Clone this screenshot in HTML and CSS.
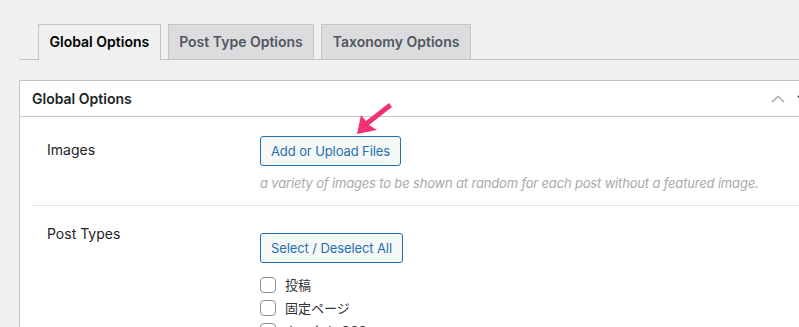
FILE: index.html
```html
<!DOCTYPE html>
<html lang="ja">
<head>
<meta charset="utf-8">
<title>Global Options</title>
<link rel="stylesheet" href="styles.css">
</head>
<body>
<div class="wrap">
  <nav class="nav-tabs">
    <a class="nav-tab active">Global Options</a>
    <a class="nav-tab">Post Type Options</a>
    <a class="nav-tab">Taxonomy Options</a>
  </nav>

  <div class="postbox">
    <div class="postbox-header">
      <h2 class="postbox-title">Global Options</h2>
      <div class="handle-actions">
        <span class="handle handle-up">
          <svg width="14" height="8" viewBox="0 0 14 8"><path d="M1 7 L7 1.5 L13 7" fill="none" stroke="currentColor" stroke-width="1.6"/></svg>
        </span>
        <span class="handle handle-down">
          <svg width="14" height="8" viewBox="0 0 14 8"><path d="M1 1 L7 6.5 L13 1" fill="none" stroke="currentColor" stroke-width="1.6"/></svg>
        </span>
        <span class="handle handle-toggle"></span>
      </div>
    </div>
    <div class="inside">
      <div class="row row-images">
        <div class="row-label">Images</div>
        <div class="row-field">
          <button class="button">Add or Upload Files</button>
          <p class="description">a variety of images to be shown at random for each post without a featured image.</p>
        </div>
      </div>
      <div class="row row-types">
        <div class="row-label">Post Types</div>
        <div class="row-field field-types">
          <button class="button">Select / Deselect All</button>
          <ul class="checks">
            <li><span class="checkbox"></span><span class="check-label">投稿</span></li>
            <li><span class="checkbox"></span><span class="check-label">固定ページ</span></li>
            <li><span class="checkbox"></span><span class="check-label">カスタム CSS</span></li>
          </ul>
        </div>
      </div>
    </div>
  </div>
</div>

<svg class="annotation" width="50" height="44" viewBox="0 0 50 44">
  <polygon points="7,36 11,17 16,23 39,5 42,9 19,27 27,32" fill="#f2336f"/>
</svg>
</body>
</html>
```

FILE: styles.css
```css
html, body {
  margin: 0;
  padding: 0;
}
body {
  background: #f0f0f1;
  font-family: Inter, "Noto Sans", "Noto Sans CJK JP", sans-serif;
  color: #1d2327;
  overflow: hidden;
  width: 799px;
  height: 327px;
  position: relative;
}
.wrap {
  width: 831px;
  padding-left: 19px;
  padding-top: 24px;
}
.nav-tabs {
  display: flex;
  border-bottom: 1px solid #c3c4c7;
  padding-left: 12px;
  height: 35px;
}
.nav-tab {
  display: block;
  margin-left: 7px;
  padding: 5px 10.5px;
  font-size: 14px;
  line-height: 24px;
  font-weight: 600;
  color: #50575e;
  background: #dcdcde;
  border: 1px solid #c3c4c7;
  border-bottom: none;
  height: 24px;
}
.nav-tab.active {
  background: #f0f0f1;
  color: #000;
  height: 25px;
  margin-bottom: -1px;
  position: relative;
}
.postbox {
  margin-top: 20px;
  background: #fff;
  border: 1px solid #c3c4c7;
  height: 300px;
}
.postbox-header {
  display: flex;
  justify-content: space-between;
  align-items: center;
  border-bottom: 1px solid #c3c4c7;
  height: 35px;
}
.postbox-title {
  margin: 0;
  padding: 0 12px;
  font-size: 14px;
  font-weight: 600;
  line-height: 20px;
  color: #1d2327;
}
.handle-actions {
  display: flex;
  height: 35px;
}
.handle {
  display: flex;
  align-items: center;
  justify-content: center;
  width: 26px;
  height: 35px;
}
.handle-up {
  color: #a7aaad;
}
.handle-down {
  color: #1d2327;
}
.handle-toggle {
  width: 32px;
}
.inside {
  padding: 0 0 0 12px;
}
.row {
  display: flex;
}
.row-label {
  width: 213px;
  padding-left: 15px;
  font-size: 14px;
  line-height: 18px;
  color: #1d2327;
}
.row-field {
  flex: 1;
}
.row-images {
  padding: 19px 0 13px;
}
.row-images .row-label {
  padding-top: 5px;
}
.row-types {
  border-top: 1px solid #e4e4e6;
  padding-top: 19px;
}
.field-types {
  padding-top: 8px;
}
.button {
  display: block;
  font-family: inherit;
  font-size: 13px;
  line-height: 28px;
  height: 30px;
  padding: 0 10px;
  color: #2271b1;
  background: #f6f7f7;
  border: 1px solid #2271b1;
  border-radius: 3px;
  cursor: pointer;
  letter-spacing: -0.1px;
}
.description {
  margin: 9px 0 0;
  font-size: 13px;
  line-height: 17px;
  font-style: italic;
  color: #a7aaad;
  white-space: nowrap;
  letter-spacing: -0.17px;
}
.checks {
  list-style: none;
  margin: 14px 0 0;
  padding: 0;
  display: flex;
  flex-direction: column;
  gap: 7px;
}
.checks li {
  display: flex;
  align-items: center;
  height: 16px;
}
.checkbox {
  width: 14px;
  height: 14px;
  border: 1px solid #8c8f94;
  border-radius: 4px;
  background: #fff;
  margin-right: 9px;
}
.check-label {
  font-size: 13px;
  line-height: 16px;
  color: #2c3338;
}
.annotation {
  position: absolute;
  left: 350px;
  top: 98px;
}
```
